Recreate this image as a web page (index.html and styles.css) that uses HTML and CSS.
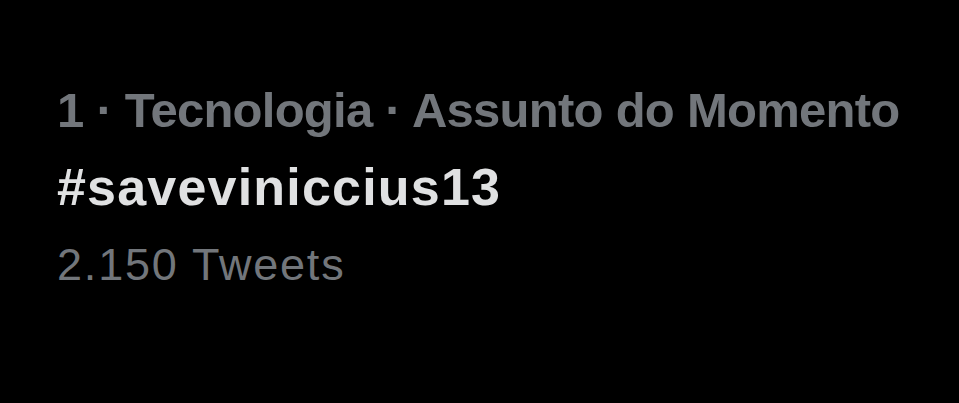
FILE: index.html
```html
<!DOCTYPE html>
<html lang="pt">
<head>
<meta charset="utf-8">
<link rel="stylesheet" href="styles.css">
</head>
<body>
<div class="trend">
  <div class="meta">1 · Tecnologia · Assunto do Momento</div>
  <div class="name">#saveviniccius13</div>
  <div class="count">2.150 Tweets</div>
</div>
</body>
</html>
```
FILE: styles.css
```css
html, body {
  margin: 0;
  background: #000;
  height: 100%;
}
.trend {
  padding: 72px 0 0 57px;
  font-family: "Liberation Sans", Arial, sans-serif;
}
.meta, .name, .count {
  line-height: 77px;
  white-space: nowrap;
}
.meta {
  font-size: 49px;
  font-weight: 700;
  color: #72767b;
  letter-spacing: -0.74px;
}
.name {
  font-size: 52px;
  font-weight: 700;
  color: #e0e1e2;
  letter-spacing: 1.2px;
}
.count {
  font-size: 45px;
  font-weight: 400;
  color: #72767b;
  letter-spacing: 1.8px;
}
```
